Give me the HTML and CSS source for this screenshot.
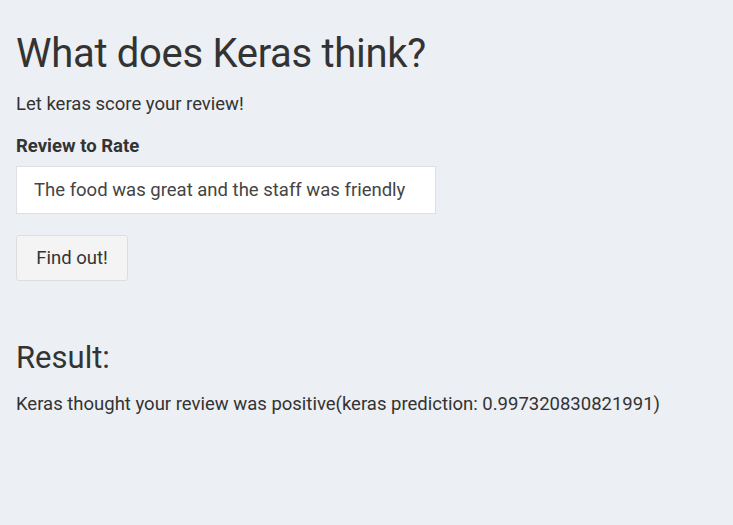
FILE: index.html
```html
<!DOCTYPE html>
<html>
<head>
<meta charset="utf-8">
<link rel="stylesheet" href="styles.css">
</head>
<body>
<div class="page">
  <h1 class="title">What does Keras think?</h1>
  <p class="lead">Let keras score your review!</p>
  <div class="field">
    <label class="label" for="review">Review to Rate</label>
    <input class="input" id="review" type="text" value="The food was great and the staff was friendly">
  </div>
  <button class="btn" type="button">Find out!</button>
  <h2 class="result-title">Result:</h2>
  <p class="result">Keras thought your review was positive(keras prediction: 0.997320830821991)</p>
</div>
</body>
</html>
```
FILE: styles.css
```css
html, body {
  margin: 0;
  padding: 0;
  background: #eceff4;
}
body {
  font-family: Roboto, "Liberation Sans", sans-serif;
  color: #333333;
  font-size: 18.5px;
}
.page {
  padding: 27px 16px 0 16px;
  display: flex;
  flex-direction: column;
  align-items: flex-start;
}
.title {
  margin: 0;
  font-size: 40px;
  font-weight: 400;
  line-height: 54px;
  letter-spacing: -0.3px;
}
.lead {
  margin: 10px 0 0 0;
  line-height: 26px;
}
.field {
  margin-top: 17px;
  display: flex;
  flex-direction: column;
}
.label {
  font-weight: 700;
  line-height: 24px;
}
.input {
  margin-top: 8px;
  width: 420px;
  height: 48px;
  box-sizing: border-box;
  border: 1px solid #dcdfe4;
  background: #ffffff;
  padding: 0 17px;
  font-family: inherit;
  font-size: 18.5px;
  color: #444444;
  outline: none;
}
.btn {
  margin-top: 21px;
  width: 112px;
  height: 46px;
  box-sizing: border-box;
  border: 1px solid #dddddd;
  border-radius: 3px;
  background: #f4f4f4;
  font-family: inherit;
  font-size: 18.5px;
  color: #333333;
}
.result-title {
  margin: 57px 0 0 0;
  font-size: 31px;
  font-weight: 400;
  line-height: 40px;
}
.result {
  margin: 13px 0 0 0;
  line-height: 26px;
}
```
